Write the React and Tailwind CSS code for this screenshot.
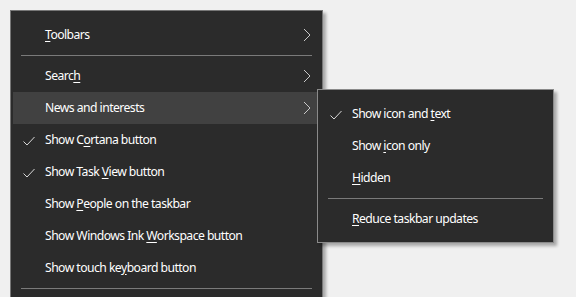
import React from "react";

const Check = () => (
  <svg width="12" height="10" viewBox="0 0 12 10" className="block">
    <polyline points="0.5,5.5 4,9 11.5,1" fill="none" stroke="#d8d8d8" strokeWidth="1" />
  </svg>
);

const Chevron = () => (
  <svg width="8" height="14" viewBox="0 0 8 14" className="block">
    <polyline points="1,1 7,7 1,13" fill="none" stroke="#c8c8c8" strokeWidth="1" />
  </svg>
);

// label split on the access key: [before, key, after]
const Label = ({ parts }) => (
  <span className="whitespace-nowrap">
    {parts[0]}
    {parts[1] && <span className="underline underline-offset-2">{parts[1]}</span>}
    {parts[2]}
  </span>
);

const Row = ({ parts, checked, sub, active }) => (
  <div
    className={`relative flex items-center h-8 pl-8 pr-[9px] text-[12.2px] tracking-[-0.55px] text-white ${
      active ? "bg-[#414141]" : ""
    }`}
  >
    {checked && (
      <span className="absolute left-[10px] top-[12px]">
        <Check />
      </span>
    )}
    <Label parts={parts} />
    {sub && (
      <span className="ml-auto">
        <Chevron />
      </span>
    )}
  </div>
);

const Separator = () => (
  <div className="h-[9px] flex items-center px-2">
    <div className="h-px w-full bg-[#7a7a7a]" />
  </div>
);

export default function App() {
  return (
    <div
      className="relative h-[297px] w-[576px] overflow-hidden bg-[#f0f0f0]"
      style={{ fontFamily: '"Noto Sans", "Open Sans", sans-serif' }}
    >
      {/* main taskbar menu */}
      <div className="absolute left-[10px] top-[10px] w-[313px] h-[320px] bg-[#2b2b2b] border border-[#777777] p-[2px] pt-[8px] shadow-[3px_3px_3px_rgba(0,0,0,0.3)]">
        <Row parts={["", "T", "oolbars"]} sub />
        <Separator />
        <Row parts={["Searc", "h", ""]} sub />
        <Row parts={["News and interests"]} sub active />
        <Row parts={["Show C", "o", "rtana button"]} checked />
        <Row parts={["Show Task ", "V", "iew button"]} checked />
        <Row parts={["Show ", "P", "eople on the taskbar"]} />
        <Row parts={["Show Windows Ink ", "W", "orkspace button"]} />
        <Row parts={["Show touch ke", "y", "board button"]} />
        <Separator />
      </div>

      {/* news and interests submenu */}
      <div className="absolute left-[317px] top-[89px] w-[237px] h-[154px] bg-[#2b2b2b] border border-[#8a8a8a] px-[2px] pt-[8px] shadow-[3px_3px_3px_rgba(0,0,0,0.3)]">
        <Row parts={["Show icon and ", "t", "ext"]} checked />
        <Row parts={["Show ", "i", "con only"]} />
        <Row parts={["", "H", "idden"]} />
        <Separator />
        <Row parts={["", "R", "educe taskbar updates"]} />
      </div>
    </div>
  );
}
